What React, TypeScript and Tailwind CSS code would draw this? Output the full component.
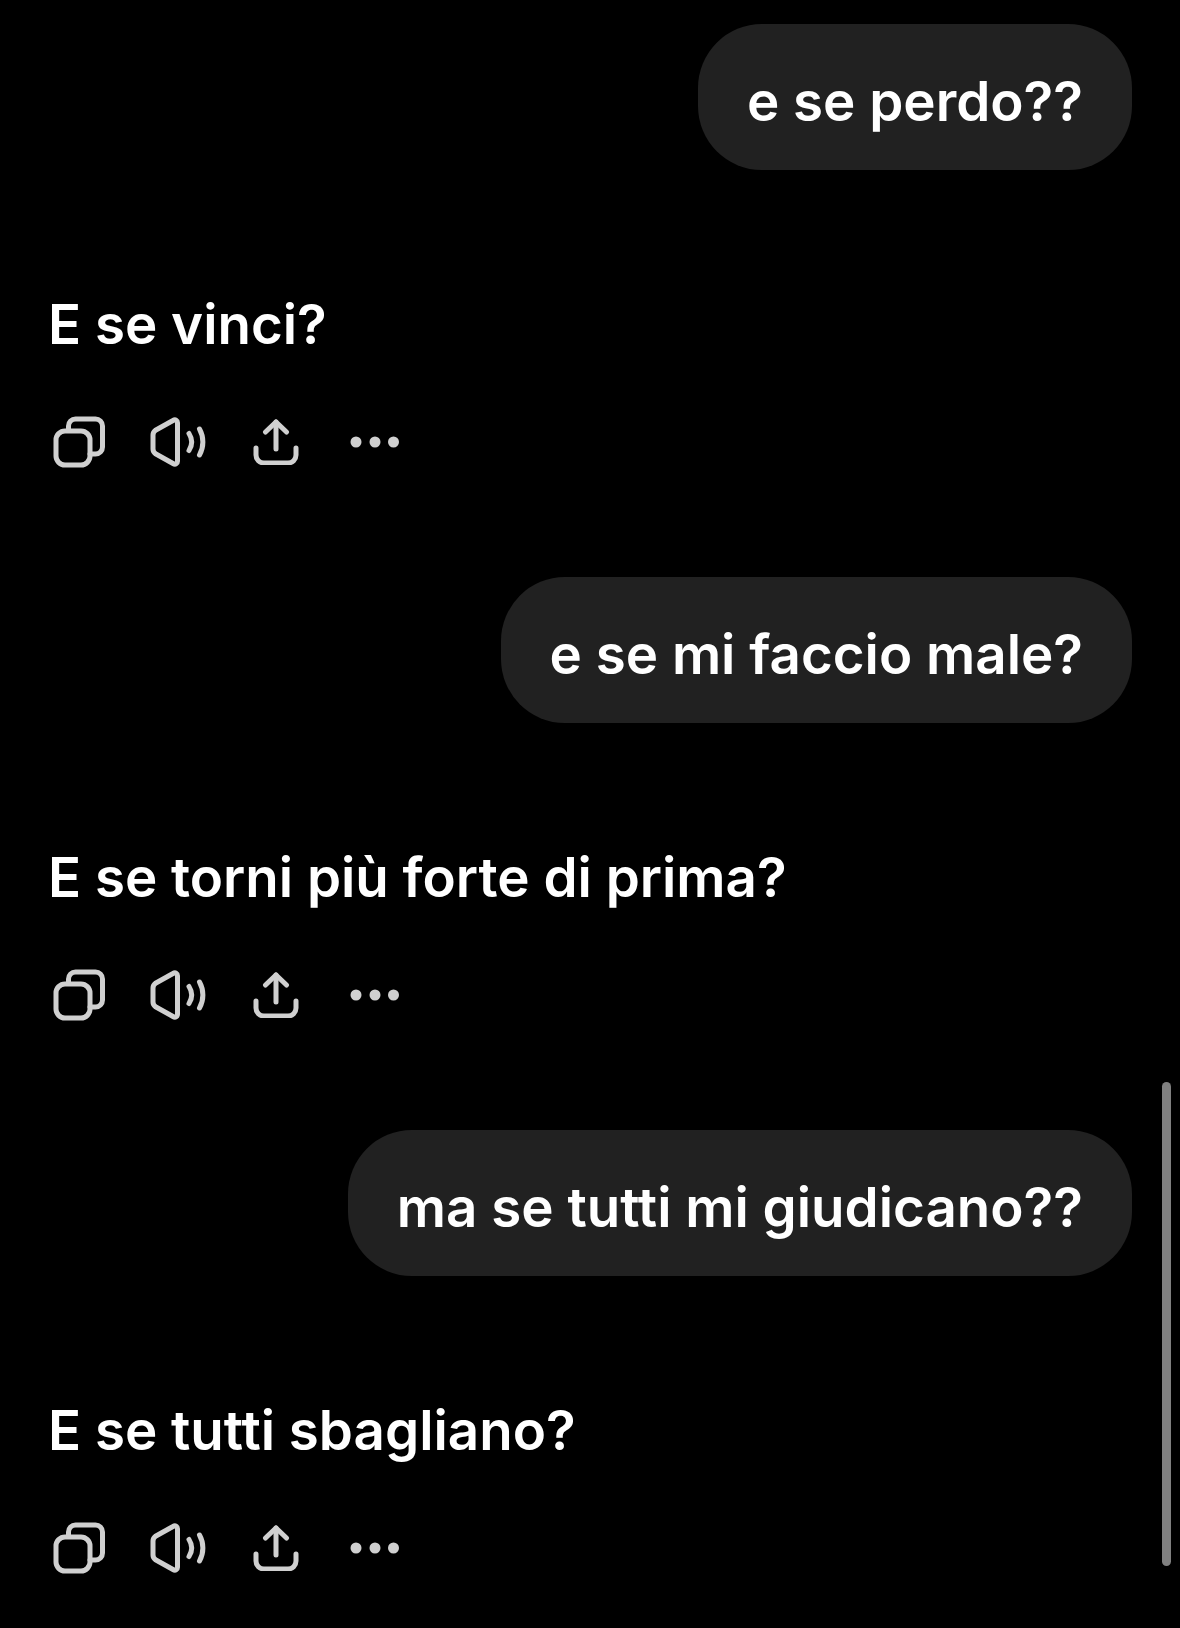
const font = "font-['Inter','Liberation_Sans',sans-serif]";

function CopyIcon() {
  return (
    <svg width="52" height="52" viewBox="0 0 52 52" fill="none" stroke="#d0d0d0" strokeWidth="5" strokeLinejoin="round" strokeLinecap="round">
      <path d="M15.500 14V10a7 7 0 0 1 7-7h20a7 7 0 0 1 7 7v21a7 7 0 0 1-7 7h-5.500" />
      <rect x="3" y="15" width="34" height="34" rx="9" />
    </svg>
  );
}

function SpeakerIcon() {
  return (
    <svg width="56" height="50" viewBox="0 0 56 50" fill="none" stroke="#d0d0d0" strokeWidth="5" strokeLinejoin="round" strokeLinecap="round">
      <path d="M3 18c0-2 .8-3.500 2.500-4.800L23 3.500c2.300-1.400 4.500-.2 4.500 2.300v38.400c0 2.500-2.200 3.700-4.500 2.300L5.500 36.800C3.800 35.500 3 34 3 32z" />
      <path d="M39 16.500c3.500 5.500 3.500 11.500 0 17" />
      <path d="M49.500 12c4.500 8 4.500 18 0 26" />
    </svg>
  );
}

function ShareIcon() {
  return (
    <svg width="46" height="46" viewBox="0 0 46 46" fill="none" stroke="#d0d0d0" strokeWidth="5" strokeLinejoin="round" strokeLinecap="round">
      <path d="M23 30V3" />
      <path d="M12.500 13 23 3l10.500 10" />
      <path d="M3 29v7a8 8 0 0 0 8 8h24a8 8 0 0 0 8-8v-7" />
    </svg>
  );
}

function DotsIcon() {
  return (
    <svg width="50" height="12" viewBox="0 0 50 12" fill="#d0d0d0">
      <circle cx="6" cy="6" r="5.500" />
      <circle cx="25" cy="6" r="5.500" />
      <circle cx="43.500" cy="6" r="5.500" />
    </svg>
  );
}

function Turn({ question, answer }: { question: string; answer: string }) {
  return (
    <div className="flex flex-col h-[553px]">
      <div className="flex justify-end">
        <div className="h-[146px] rounded-[64px] bg-[#212121] px-[49px] pt-[8px] flex items-center text-[54.7px] font-semibold text-white">
          {question}
        </div>
      </div>
      <div className="mt-[119px] h-[70px] leading-[70px] text-[54.7px] font-semibold text-white">{answer}</div>
      <div className="mt-[58px] flex items-center h-[50px] ml-[5px]">
        <CopyIcon />
        <div className="ml-[45px]"><SpeakerIcon /></div>
        <div className="ml-[47px]"><ShareIcon /></div>
        <div className="ml-[51px]"><DotsIcon /></div>
      </div>
    </div>
  );
}

export default function App() {
  return (
    <div className={`relative w-[1180px] h-[1628px] overflow-hidden bg-black pt-[24px] pl-[48px] pr-[48px] ${font}`}>
      <Turn question="e se perdo??" answer="E se vinci?" />
      <Turn question="e se mi faccio male?" answer="E se torni più forte di prima?" />
      <Turn question="ma se tutti mi giudicano??" answer="E se tutti sbagliano?" />
      <div className="absolute left-[1162px] top-[1082px] w-[9px] h-[484px] rounded-full bg-[#808080]" />
    </div>
  );
}
